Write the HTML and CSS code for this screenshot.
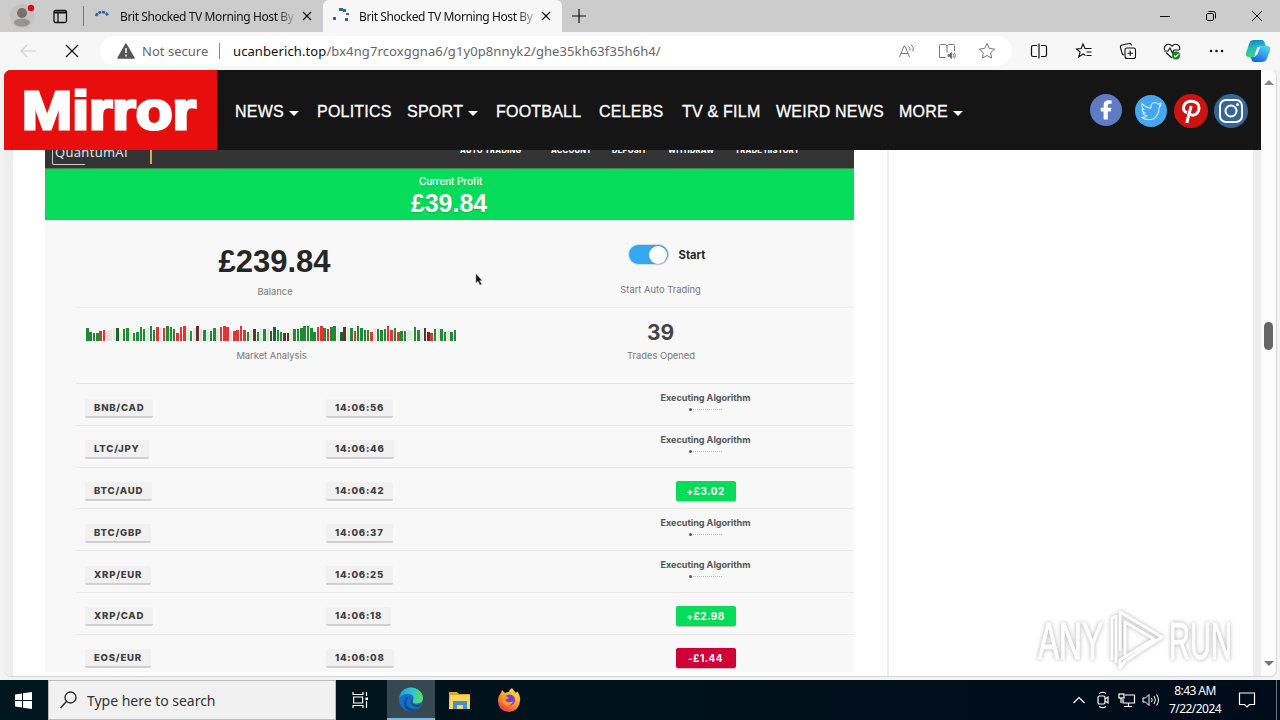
FILE: index.html
```html
<!DOCTYPE html>
<html lang="en">
<head>
<meta charset="utf-8">
<title>Brit Shocked TV Morning Host</title>
<link rel="stylesheet" href="styles.css">
</head>
<body>
<div class="screen">
  <header class="tabbar">
    <div class="profile"><svg width="28" height="26" viewBox="0 0 28 26"><circle cx="14" cy="13" r="12" fill="#c4c1be"/><circle cx="14" cy="10" r="5" fill="#77716c"/><ellipse cx="14" cy="19.5" rx="8" ry="4" fill="#989391"/><circle cx="23" cy="5" r="3.2" fill="#e00b12"/></svg></div>
    <div class="tabmenu"><svg width="15" height="15" viewBox="0 0 15 15" fill="none" stroke="#111" stroke-width="1.3"><rect x="1" y="1.5" width="12.5" height="12" rx="1.5"/><path d="M1 3.500h12.500" stroke-width="2"/><path d="M5 4v9.500"/></svg></div>
    <i class="tabsep"></i>
    <div class="tab">
      <svg class="spin" width="16" height="16" viewBox="0 0 16 16" fill="none"><path d="M2 7A6.500 6.500 0 0 1 14 7" stroke="#2d6594" stroke-width="2.600" stroke-dasharray="3 .8"/></svg>
      <span class="tabtitle">Brit Shocked TV Morning Host By</span>
      <svg class="tabx" width="10" height="10" viewBox="0 0 10 10" stroke="#111" stroke-width="1.200"><path d="M1 1l8 8M9 1l-8 8"/></svg>
    </div>
    <div class="tab active">
      <svg class="spin" width="16" height="16" viewBox="0 0 16 16" fill="#2d6594"><rect x="0" y="9" width="3" height="3"/><rect x="6" y="0" width="4" height="3"/><rect x="10" y="1" width="3" height="3"/><rect x="13" y="5" width="3" height="2"/><rect x="12" y="10" width="3" height="3"/></svg>
      <span class="tabtitle">Brit Shocked TV Morning Host By</span>
      <svg class="tabx" width="10" height="10" viewBox="0 0 10 10" stroke="#111" stroke-width="1.200"><path d="M1 1l8 8M9 1l-8 8"/></svg>
    </div>
    <svg class="newtab" width="14" height="14" viewBox="0 0 14 14" stroke="#111" stroke-width="1.200"><path d="M7 0v14M0 7h14"/></svg>
    <div class="winctl">
      <svg width="12" height="12" viewBox="0 0 12 12" fill="none" stroke="#111"><path d="M1 6.500h10"/></svg>
      <svg width="12" height="12" viewBox="0 0 12 12" fill="none" stroke="#111"><rect x="1.500" y="3.500" width="7" height="7" rx="1.500"/><path d="M3.500 1.500h5a2 2 0 0 1 2 2v5"/></svg>
      <svg width="12" height="12" viewBox="0 0 12 12" fill="none" stroke="#111"><path d="M1 1l10 10M11 1L1 11"/></svg>
    </div>
  </header>

  <div class="toolbar">
    <div class="navbtns">
      <svg width="18" height="16" viewBox="0 0 18 16" fill="none" stroke="#d0d0d0" stroke-width="1.200"><path d="M16 8H1M7 2L1 8l6 6"/></svg>
      <svg width="14" height="14" viewBox="0 0 14 14" fill="none" stroke="#111" stroke-width="1.200"><path d="M1 1l12 12M13 1L1 13"/></svg>
    </div>
    <div class="address">
      <svg class="warn" width="18" height="16" viewBox="0 0 18 16"><path d="M9 1L17 15H1z" fill="#555" stroke="#555" stroke-width="1.500" stroke-linejoin="round"/><path d="M9 5v5M9 11.500v2" stroke="#fff" stroke-width="1.500"/></svg>
      <span class="notsecure">Not secure</span><i class="addrsep"></i>
      <span class="url"><b>ucanberich.top</b>/bx4ng7rcoxggna6/g1y0p8nnyk2/ghe35kh63f35h6h4/</span>
      <div class="addricons">
        <svg width="18" height="16" viewBox="0 0 18 16" fill="none" stroke="#777"><path d="M1.500 14L6 3h1l4.500 11M3 10.500h7M10.500 3.500q2 1.500 1.500 4M13 1.500q3.500 3 2 7"/></svg>
        <svg width="18" height="16" viewBox="0 0 18 16" fill="none" stroke="#777"><path d="M7.500 14.500H1.500V2.500q0-1 1-1h5L9 3l1.500-1.500h5q1 0 1 1V8M9 3v6.500"/><path d="M10 11.500h1.500l2-2v6l-2-2H10z" fill="#666"/><path d="M15 10.500q1 2 0 4M16.500 9.500q1.500 3 0 6"/></svg>
        <svg width="18" height="18" viewBox="0 0 18 18" fill="none" stroke="#777"><path d="M9 1.500l2.300 4.900 5.200.7-3.800 3.700.9 5.300L9 13.500l-4.600 2.600.9-5.300L1.500 7.100l5.200-.7z" stroke-linejoin="round"/></svg>
      </div>
    </div>
    <div class="tools">
      <svg width="18" height="18" viewBox="0 0 18 18" fill="none" stroke="#111" stroke-width="1.200"><path d="M9 1.500v15M7 3.500H3q-1.500 0-1.500 1.500v8q0 1.500 1.500 1.500h4M11 3.500h4q1.500 0 1.500 1.500v8q0 1.500-1.500 1.500h-4"/></svg>
      <svg width="18" height="18" viewBox="0 0 18 18" fill="none" stroke="#111" stroke-width="1.100"><path d="M10.500 13.500L8 12l-4.300 3 1.400-5L1.500 7l4.700-.5L8 2l2 4.500h6.500M11.500 10h5M11.500 13.500h5"/></svg>
      <svg width="18" height="18" viewBox="0 0 18 18" fill="none" stroke="#111" stroke-width="1.100"><rect x="6" y="6" width="10.500" height="10.500" rx="2"/><path d="M11.200 8.500v5.500M8.500 11.200H14M5 13Q3.500 13 3 11L1.500 5.500Q1 3.500 3 3l7-1.500q2-.5 2.500 2"/></svg>
      <svg width="18" height="18" viewBox="0 0 18 18" fill="none" stroke="#111" stroke-width="1.100"><path d="M9 16L3 10.500M1.500 8C.5 3 5.500.5 9 4c3.500-3.500 9-1 7.500 4M1 9h4l2-3 2.500 5 1.500-3h5"/><circle cx="13" cy="13.500" r="4" fill="#17801d" stroke="none"/><path d="M11 13.500l1.500 1.500 3-3" stroke="#fff"/></svg>
      <svg width="18" height="18" viewBox="0 0 18 18" fill="#111"><circle cx="3" cy="9" r="1.300"/><circle cx="8.500" cy="9" r="1.300"/><circle cx="14" cy="9" r="1.300"/></svg>
      <svg width="26" height="24" viewBox="0 0 26 24"><defs><linearGradient id="cp1" x1="0" y1="0" x2=".2" y2="1"><stop stop-color="#1578d6"/><stop offset=".5" stop-color="#22bfb4"/><stop offset="1" stop-color="#35d38b"/></linearGradient><linearGradient id="cp2" x1=".6" y1="0" x2="0" y2="1"><stop stop-color="#4ccdf6"/><stop offset=".6" stop-color="#2581ec"/><stop offset="1" stop-color="#1556ca"/></linearGradient></defs><path d="M9 1h8q2 0 3 4l1 2h-5q-2 0-3 3l-2 5q-1 3-4 3H4q-4 0-3-4l3-9q1-4 5-4z" fill="url(#cp1)"/><path d="M17 23H9q-2 0-3-4l-1-1h3q3 0 4-3l2-6q1-2 3-2h5q4 0 3 5l-3 7q-1 4-5 4z" fill="url(#cp2)"/><path d="M12.500 8h2.500l-3 8H9.500z" fill="#fff"/></svg>
    </div>
  </div>

  <main class="page">
    <div class="viewport">
      <nav class="site">
        <div class="brand"><svg width="213" height="80" viewBox="0 0 213 80"><text class="brandtext" x="18" y="58.5" textLength="174" lengthAdjust="spacingAndGlyphs">Mirror</text></svg></div>
        <div class="links">
          <span class="drop">NEWS</span><span>POLITICS</span><span class="drop">SPORT</span><span>FOOTBALL</span><span>CELEBS</span><span>TV &amp; FILM</span><span>WEIRD NEWS</span><span class="drop">MORE</span>
        </div>
        <div class="social">
          <svg width="34" height="34" viewBox="0 0 34 34"><circle cx="17" cy="16" r="16" fill="#5f7bc4"/><path d="M18.800 25.500V17.500h3l.6-3.700h-3.600V11.500q0-1.700 1.800-1.700h2V6.500q-8-1.400-8 4.400v2.900h-2.800v3.700h2.800v8z" fill="#fff"/></svg>
          <svg width="34" height="34" viewBox="0 0 34 34"><circle cx="17" cy="17" r="16" fill="#45a8ee"/><path d="M8 9.500q4 4.500 9 4.500-.5-5 4-5.500 2 0 3 1.500l3-1-1.500 2.500L27 11q-1 2-2 2.500Q25 22 19 25q-6 2-11.500-1.500 4 0 5.500-1.500-3.500-1-4-3h2q-3-1.500-3-4l2 .5q-3-2.500-2-6z" fill="none" stroke="#c5e5ff" stroke-width="1.200" stroke-linejoin="round"/></svg>
          <svg width="34" height="34" viewBox="0 0 34 34"><circle cx="17" cy="17" r="17" fill="#ce1212"/><path d="M13 29q.3-3 1.200-6l3-11M13 18.500Q8 17 10 11.500C13 5.500 25 6 25 13.500c0 6-5 9.500-9.500 6.500" fill="none" stroke="#fff" stroke-width="3"/></svg>
          <svg width="34" height="34" viewBox="0 0 34 34"><circle cx="17" cy="17" r="17" fill="#376596"/><rect x="6" y="6" width="22" height="22" rx="6" fill="none" stroke="#fff" stroke-width="2"/><circle cx="17" cy="17" r="5.500" fill="none" stroke="#fff" stroke-width="2"/><circle cx="23.500" cy="10.500" r="1.500" fill="#fff"/></svg>
        </div>
      </nav>
      <div class="content">
        <section class="dash">
          <div class="dashtop">
            <div class="qai"><span>QuantumAI</span></div><i class="orange"></i>
            <div class="dashnav"><span>AUTO TRADING</span><span>ACCOUNT</span><span>DEPOSIT</span><span>WITHDRAW</span><span>TRADE HISTORY</span></div>
          </div>
          <div class="profit"><span>Current Profit</span><strong>£39.84</strong></div>
          <div class="stats">
            <div class="stat balance"><strong>£239.84</strong><span>Balance</span></div>
            <div class="stat auto"><div class="toggle"><i class="switch"></i><b>Start</b></div><span>Start Auto Trading</span></div>
            <div class="stat market"><div class="bars" id="bars"></div><span>Market Analysis</span></div>
            <div class="stat opened"><strong>39</strong><span>Trades Opened</span></div>
          </div>
          <div class="trades">
            <div class="trade"><span class="tag">BNB/CAD</span><span class="tag">14:06:56</span><div class="exec">Executing Algorithm<i></i></div></div>
            <div class="trade"><span class="tag">LTC/JPY</span><span class="tag">14:06:46</span><div class="exec">Executing Algorithm<i></i></div></div>
            <div class="trade"><span class="tag">BTC/AUD</span><span class="tag">14:06:42</span><span class="result">+£3.02</span></div>
            <div class="trade"><span class="tag">BTC/GBP</span><span class="tag">14:06:37</span><div class="exec">Executing Algorithm<i></i></div></div>
            <div class="trade"><span class="tag">XRP/EUR</span><span class="tag">14:06:25</span><div class="exec">Executing Algorithm<i></i></div></div>
            <div class="trade"><span class="tag">XRP/CAD</span><span class="tag">14:06:18</span><span class="result">+£2.98</span></div>
            <div class="trade"><span class="tag">EOS/EUR</span><span class="tag">14:06:08</span><span class="result loss">-£1.44</span></div>
          </div>
          <svg class="cursor" width="8" height="13" viewBox="0 0 8 13"><path d="M1 1v9l2-2 2 4 1.500-1-2-3.500H7z" fill="#111" stroke="#999" stroke-width=".5"/></svg>
        </section>
        <aside class="side"></aside>
      </div>
    </div>
    <div class="scrollbar"><i class="up"></i><i class="thumb"></i><i class="down"></i></div>
  </main>

  <footer class="taskbar">
    <div class="start"><svg width="17" height="17" viewBox="0 0 17 17" fill="#fff"><path d="M0 2.500l7-1v6.500H0zM8 1.300L17 0v8H8zM0 9h7v6.500l-7-1zM8 9h9v8l-9-1.300z"/></svg></div>
    <div class="search"><svg width="17" height="18" viewBox="0 0 17 18" fill="none" stroke="#222" stroke-width="1.300"><circle cx="10.500" cy="6.500" r="5.500"/><path d="M6.500 10.500L.5 17"/></svg><span>Type here to search</span></div>
    <div class="apps">
      <div><svg width="17" height="16" viewBox="0 0 17 16" fill="none" stroke="#fff" stroke-width="1.200"><path d="M1 0v2.500h10V0M1 16v-2.500h10V16M1.600 5h9v6h-9zM14.500 0v4M14.500 9v7"/><rect x="13.500" y="5.500" width="2.500" height="2.500" fill="#fff" stroke="none"/></svg></div>
      <div class="current"><svg width="24" height="25" viewBox="0 0 24 25"><defs><linearGradient id="eg" x1="0" y1=".3" x2="1" y2=".4"><stop stop-color="#229bd9"/><stop offset=".55" stop-color="#31c5ca"/><stop offset="1" stop-color="#5cdd63"/></linearGradient></defs><circle cx="12" cy="12.500" r="12" fill="#1470c5"/><path d="M0 12C1 4 6 .5 12 .5S24 5 24 11q0 5-6 5.500-6 .5-4-3Q16 7 9 7 2 7 0 12z" fill="url(#eg)"/><path d="M8 12q-3 9 8 10 4 0 6-2-4 5-10 4.500Q4 23 5 15q.5-5 5-5.500-2 1-2 2.500z" fill="#0d4e9c"/><path d="M14 12q-3 5 4 6 3 0 5-2-2 5-6 4-7-2-5-7z" fill="#374850"/></svg></div>
      <div><svg width="22" height="19" viewBox="0 0 22 19"><path d="M0 1h8l2 2h11v15H0z" fill="#e5a52d"/><path d="M1 4h20v14H0z" fill="#ffd65b"/><path d="M4 18v-8h14v8h-4v-4H8v4z" fill="#3d94d2"/></svg></div>
      <div><svg width="24" height="24" viewBox="0 0 24 24"><defs><linearGradient id="ff" x1=".8" y1="0" x2=".2" y2="1"><stop stop-color="#ffe850"/><stop offset=".5" stop-color="#ff9a20"/><stop offset="1" stop-color="#ee2a58"/></linearGradient></defs><path d="M15 0q1 2 4 5 1-1 1-2 4 5 3 10-1 10-11 11Q1 23 1 13q0-5 3-8l1-3 3 3q2-1 4-1 0-2 3-4z" fill="url(#ff)"/><circle cx="12.500" cy="12" r="5.500" fill="#7044c8"/><path d="M5 9q5-2 7 1l-4 2q3 4 8 1-2 6-8 4-3-2-3-8z" fill="#ff9a25"/></svg></div>
    </div>
    <div class="tray">
      <svg width="14" height="10" viewBox="0 0 14 10" fill="none" stroke="#fff" stroke-width="1.200"><path d="M1.500 8L7 2.500 12.500 8"/></svg>
      <svg width="14" height="18" viewBox="0 0 14 18" fill="none" stroke="#fff" stroke-width="1.200"><rect x="2" y="5" width="7" height="8" rx="1.500"/><path d="M9 8l3-2v6l-3-2M3 2.500q4-2.500 7 0M3 15.500q4 2.500 7 0"/></svg>
      <svg width="18" height="16" viewBox="0 0 18 16" fill="none" stroke="#fff" stroke-width="1.200"><path d="M7 3h9.500v8H5V7M10.500 11v3M6 14.500h8"/><rect x="1" y="2" width="5" height="4"/><path d="M3 6v5"/></svg>
      <svg width="18" height="14" viewBox="0 0 18 14" fill="none" stroke="#fff"><path d="M1 5h2.500L7 1.500v11L3.500 9H1zM9.500 5q1.500 2 0 4M12 3q3 4 0 8M14.500 1.500q4 5.500 0 11"/></svg>
      <div class="clock"><span>8:43 AM</span><span>7/22/2024</span></div>
      <svg class="note" width="18" height="18" viewBox="0 0 18 18" fill="none" stroke="#fff" stroke-width="1.200"><path d="M1.500 2h15v11.500h-5L9 16l-2.500-2.500h-5z"/></svg>
      <i class="peek"></i>
    </div>
  </footer>

  <svg class="watermark" width="206" height="76" viewBox="0 0 206 76">
    <g class="wm">
      <text x="8" y="55" textLength="65" lengthAdjust="spacingAndGlyphs">ANY</text>
      <text x="139" y="55" textLength="63" lengthAdjust="spacingAndGlyphs">RUN</text>
      <path d="M82 56V14l4-2v47M90 47V8l42 25-37 24-5 7V56l34-21-29-17v33"/>
    </g>
  </svg>
</div>
<script src="bars.js"></script>
</body>
</html>
```
FILE: styles.css
```css
* { box-sizing: border-box; }
body { margin: 0; font-family: "Liberation Sans", sans-serif; }
svg { display: block; flex: none; }
.screen { position: relative; width: 1280px; height: 720px; overflow: hidden; display: flex; flex-direction: column; background: #f3f3f3; }

.tabbar { height: 32px; flex: none; display: flex; align-items: center; background: #ccc; font: 12px "Noto Sans", sans-serif; color: #111; }
.profile { width: 44px; padding-left: 8px; }
.tabmenu { width: 39px; padding-left: 9px; }
.tabsep { width: 1px; height: 20px; background: #777; }
.tab { width: 239px; height: 32px; display: flex; align-items: center; padding-left: 10px; }
.tab.active { background: #f7f7f7; border-radius: 6px 6px 0 0; }
.spin { margin-right: 10px; }
.tab:not(.active) .spin { margin-top: 2px; }
.tabtitle { width: 178px; white-space: nowrap; letter-spacing: -.4px; background: linear-gradient(90deg, #111 88%, #ccc); -webkit-background-clip: text; color: transparent; }
.tabx { margin-left: 4px; }
.newtab { margin-left: 10px; }
.winctl { margin-left: auto; display: flex; }
.winctl svg { margin: 0 17px; }

.toolbar { height: 38px; flex: none; display: flex; align-items: center; background: #f7f7f7; font-family: "Noto Sans", sans-serif; }
.navbtns { width: 100px; display: flex; align-items: center; gap: 27px; padding-left: 20px; }
.address { width: 912px; height: 30px; border-radius: 15px; background: #fff; display: flex; align-items: center; padding: 0 5px 0 17px; font-size: 13px; color: #666; white-space: nowrap; }
.notsecure { width: 77px; padding-left: 7px; letter-spacing: .02px; }
.addrsep { width: 1px; height: 16px; background: #888; margin: 0 13px 0 7px; }
.url { letter-spacing: .1px; }
.url b { font-weight: 400; color: #111; }
.addricons { margin-left: auto; display: flex; align-items: center; }
.addricons svg { margin: 0 11px; }
.tools { display: flex; align-items: center; padding-left: 5px; }
.tools svg { margin: 0 13.200px; }
.tools svg:last-child { margin: 0 0 0 6px; }

.page { width: 1273px; height: 607px; margin-left: 4px; flex: none; display: flex; background: #fff; border-radius: 7px; overflow: hidden; border: solid #d5d5d5; border-width: 0 1px 1px 0; }
.viewport { width: 1257px; flex: none; display: flex; flex-direction: column; }
.site { height: 80px; flex: none; display: flex; background: #151515; position: relative; z-index: 1; }
.brand { width: 213px; background: #e90e0e; }
.brandtext { font: 700 53px "Liberation Sans", sans-serif; fill: #fff; stroke: #fff; stroke-width: 3px; }
.links { padding-left: 18px; width: 869px; display: grid; grid-template-columns: 82px 90px 89px 103px 83px 94px 123px 80px; align-items: center; padding-top: 4px; font-size: 16px; font-kerning: none; letter-spacing: .22px; color: #fff; white-space: nowrap; -webkit-text-stroke: .3px #fff; }
.drop::after { content: ""; display: inline-block; border: 5px solid transparent; border-top-color: #fff; border-bottom: 0; margin-left: 5px; vertical-align: 1px; }
.social { display: grid; grid-template-columns: 45px 40px 40px 34px; align-items: center; padding-top: 2px; margin-left: 3px; }
.content { flex: 1; display: flex; min-height: 0; border: solid #eee; border-width: 0 8px 0 9px; }
.dash { position: relative; width: 809px; height: 522px; margin-left: 32px; background: #f8f8f8; overflow: hidden; color: #262626; font-family: Inter, sans-serif; }
.side { margin-left: 33px; width: 2px; background: #eee; }

.dashtop { height: 18px; background: #333; display: flex; align-items: flex-start; }
.qai { width: 98px; height: 15px; margin-left: 7px; position: relative; color: #eee; font: 13px/14px "Open Sans", sans-serif; }
.qai::before { content: ""; position: absolute; left: 0; bottom: 0; width: 32px; height: 18px; border: 1.500px solid #ccc; border-right-color: transparent; border-radius: 2px; }
.qai span { display: block; width: 88px; height: 15px; margin: -5px 0 0 3px; letter-spacing: .35px; }
.orange { width: 1.500px; height: 14px; background: #d5a84b; }
.dashnav { display: grid; grid-template-columns: 91px 61px 56px 67px 80px; margin: -5.500px 0 0 308.500px; font: 800 7.500px/12px Inter, sans-serif; letter-spacing: .28px; color: #fff; white-space: nowrap; }
.profit { height: 52px; background: #04dc5a; color: #fff; display: flex; flex-direction: column; align-items: center; padding: 6px 1px 0 0; line-height: 1; border-top: 1px solid #488052; }
.profit span { font-size: 10px; line-height: 13px; padding-left: 3px; letter-spacing: -.05px; -webkit-text-stroke: .2px #fff; }
.profit strong { font: 700 25px/30px "Liberation Sans", sans-serif; text-shadow: 0 1px 1px #2a8b4c88; }
.stats { margin-left: 31px; height: 164px; display: grid; grid-template-columns: 390px 388px; grid-template-rows: 87.500px 76.500px; border-bottom: 1.500px solid #e3e3e3; }
.stat { display: flex; flex-direction: column; align-items: center; }
.stat > span { font-size: 9.400px; line-height: 12px; color: #777; letter-spacing: -.02px; padding-left: 1px; }
.balance, .auto { border-bottom: 1px solid #eee; }
.balance { padding: 24px 0 0 7px; }
.balance strong { font: 700 31px/36px "Liberation Sans", sans-serif; height: 41px; }
.balance > span { padding-top: 1px; }
.auto { padding-top: 22px; }
.toggle { display: flex; align-items: center; gap: 10px; height: 24px; padding-left: 13px; font-size: 11.200px; line-height: 16px; margin-bottom: 18px; }
.toggle b { padding-top: 1px; }
.switch { width: 41px; height: 21px; border-radius: 11px; background: #32a7f4; padding: 1px; border: 1px solid #d5dce0; }
.switch::after { content: ""; display: block; margin-left: auto; width: 18px; height: 18px; border-radius: 50%; background: #fff; box-shadow: 0 0 2px #888; }
.market { padding: 17px 0 0; }
.bars { height: 16px; width: 370px; display: flex; align-items: flex-end; gap: .8px; margin-bottom: 9px; }
.bars i { flex: 1; }
.opened { padding: 12px 0 0 1px; }
.opened strong { font-size: 21px; line-height: 25px; margin-bottom: 5px; color: #444; }
.trades { margin-left: 31px; }
.trade { height: 41.800px; border-bottom: 1.500px solid #e9e9e9; display: grid; grid-template-columns: 241px 231px 297px; padding-left: 9px; align-items: start; }
.tag { justify-self: start; margin-top: 14.500px; height: 19px; padding: 0 9px; font-size: 9.600px; font-weight: 800; line-height: 18px; letter-spacing: .75px; background: #f1f1f1; border-bottom: 2px solid #cfcfcf; border-radius: 2px; color: #3e3e3e; }
.exec { text-align: center; font-size: 9.100px; font-weight: 700; line-height: 12px; padding-top: 8px; color: #555; letter-spacing: -.03px; }
.exec i { display: block; width: 32px; margin: 5px auto 0; border-top: 1.500px dotted #bbb; position: relative; }
.exec i::before { content: ""; position: absolute; left: -1px; top: -2px; width: 3px; height: 3px; border-radius: 50%; background: #555; }
.result { justify-self: center; margin-top: 13px; width: 60px; height: 20px; line-height: 20px; text-align: center; font-size: 10px; font-weight: 700; letter-spacing: .5px; color: #fff; background: #04dc5a; border-radius: 2px; box-shadow: 0 1px 1px #bbb; }
.result.loss { background: #cf0038; }
.cursor { position: absolute; left: 430px; top: 123px; }

.scrollbar { width: 15px; flex: none; display: flex; flex-direction: column; align-items: center; background: #fcfcfc; padding: 10px 0 10px; }
.up, .down { border: 5px solid transparent; }
.up { border-bottom-color: #888; border-top: 0; }
.down { border-top-color: #777; border-bottom: 0; margin-top: auto; }
.thumb { width: 9px; height: 28px; border-radius: 5px; background: #666; margin-top: 237px; }

.taskbar { height: 40px; flex: none; margin-top: auto; background: linear-gradient(90deg, #001720, #00121c 50%, #000b1a); display: flex; align-items: stretch; color: #fff; font-family: "Noto Sans", sans-serif; }
.start { width: 48px; padding: 12px 0 0 15px; }
.search { width: 288px; background: #f1f1f1; border: 1px solid #bbb; display: flex; align-items: center; padding-left: 11px; gap: 10px; color: #333; font-size: 14px; letter-spacing: -.02px; }
.apps { display: grid; grid-template-columns: 51px 48px 50px 48px; }
.apps div { display: flex; align-items: center; justify-content: center; }
.apps div:first-child { padding-right: 3px; }
.apps .current { background: #374850; border-bottom: 2px solid #76b9ed; }
.tray { margin-left: auto; display: flex; align-items: center; }
.tray > svg { margin: 0 5px; }
.tray > svg:nth-child(3), .tray > svg:nth-child(4) { margin: 0 3px; }
.clock { width: 67px; padding-right: 3px; display: flex; flex-direction: column; text-align: center; font-size: 12px; line-height: 18px; letter-spacing: -.55px; }
.tray > .note { margin: 0 20px 0 8px; }
.peek { width: 4px; height: 40px; border-left: 1px solid #66707a; }

.watermark { position: absolute; left: 1030px; top: 604px; opacity: .8; }
.wm { filter: drop-shadow(0 0 2px #999); font: 52px "Liberation Sans Narrow", "Liberation Sans", sans-serif; fill: #fff; }
.wm text { stroke: #fff; stroke-width: 1px; }
.wm path { fill: none; stroke: #fff; stroke-width: 3px; stroke-linejoin: round; }
```
FILE: bars.js
```js
const colors = { g: "#1f8c33", c: "#1b6326", r: "#df3535", d: "#6e2a26", l: "#dcebdc", p: "#f3dada" };
const data = "g12 g8 g7 g7 r9 r10 p9 l10 l12 c12 l8 g11 g12 l10 g7 g8 g13 g11 l12 g14 g10 r13 p12 r12 g14 g13 g11 r7 r13 r14 l12 g9 l12 d14 p11 g10 l11 g9 g12 l11 r13 r14 r13 p9 r9 r10 r14 r10 g8 l9 d11 g8 l12 g11 p12 c9 c13 g10 g8 d7 d7 l11 g11 g11 g12 g14 g14 g12 g8 r13 r14 g12 r11 g13 g14 l12 c8 d13 l12 g12 r9 g14 g12 g10 g10 r8 p12 g11 g10 g11 r14 r10 g12 r8 g9 g9 l10 l9 g13 g10 l8 d12 d8 r7 g11 l12 g11 g8 l9 g8 g10";
const bars = document.getElementById("bars");
for (const item of data.split(" ")) {
  const bar = document.createElement("i");
  bar.style.background = colors[item[0]];
  bar.style.height = Number(item.slice(1)) + 1 + "px";
  bars.append(bar);
}
```
